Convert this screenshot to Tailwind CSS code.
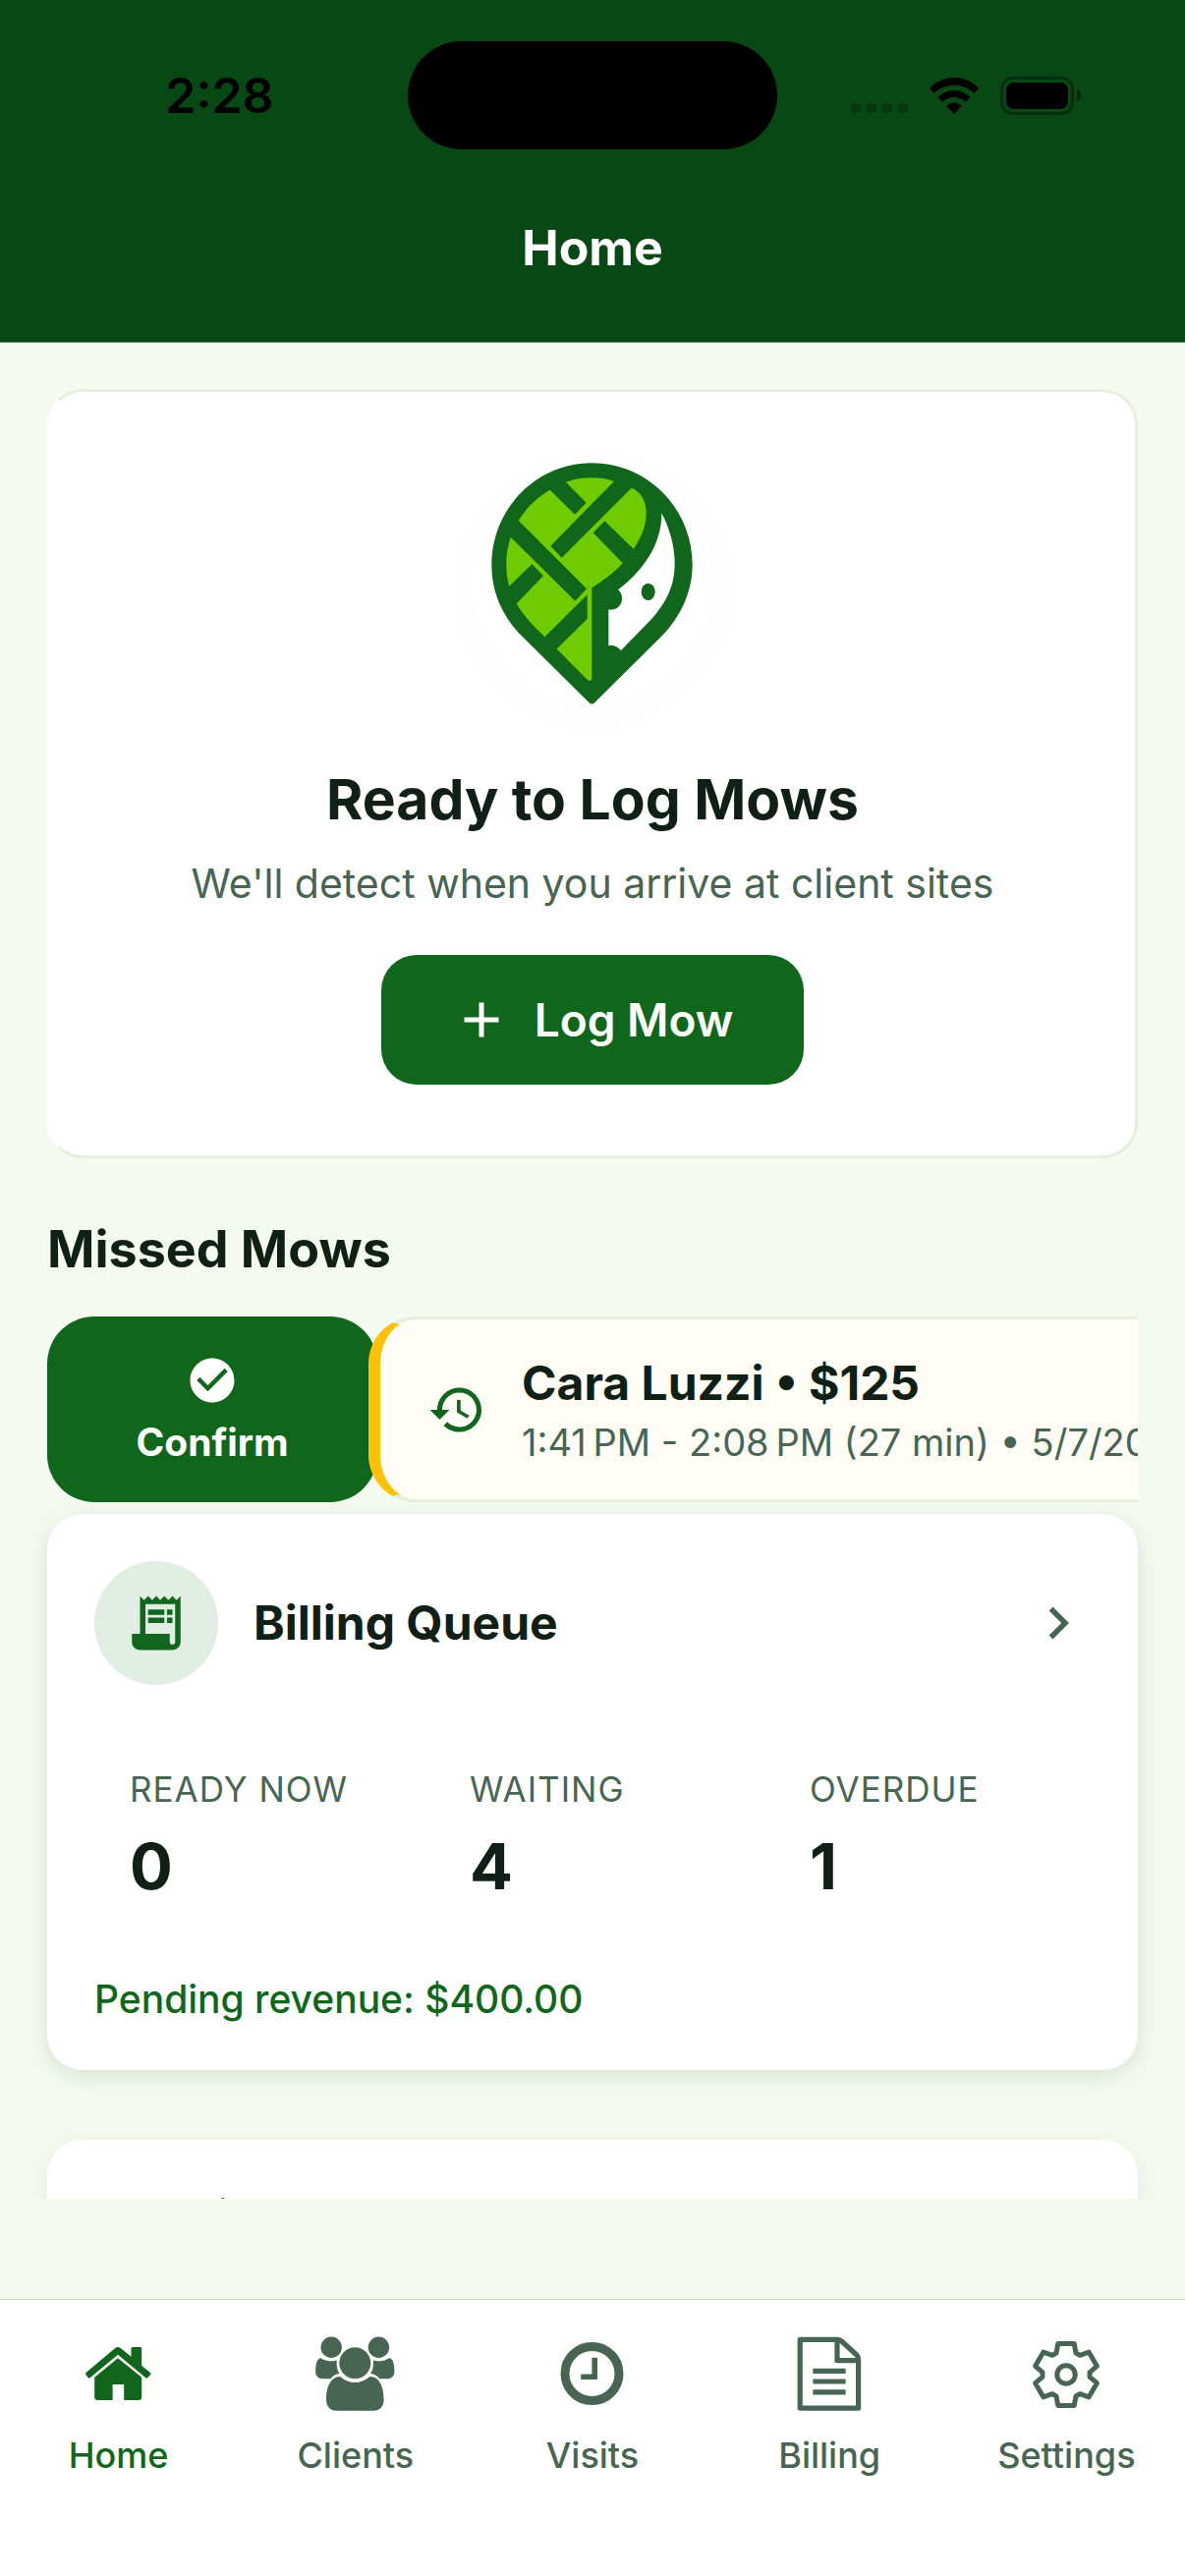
<!DOCTYPE html>
<html lang="en">
<head>
    <meta charset="UTF-8">
    <meta name="viewport" content="width=device-width, initial-scale=1.0">
    <title>Home</title>
    <script src="https://cdn.jsdelivr.net/npm/@tailwindcss/browser@4"></script>
</head>
<body class="h-screen flex flex-col overflow-hidden bg-[#f4faf0] font-[Inter,sans-serif] text-[#102016]">
    <header class="bg-[#084814] border-b border-[#7d9a80]">
        <!-- Status bar -->
        <div class="grid grid-cols-[1fr_376px_1fr] items-center h-[156px] pt-[38px] text-black">
            <div class="pl-8 text-center text-[50px] leading-[60px] font-semibold">2:28</div>
            <div class="h-[110px] rounded-full bg-black"></div>
            <div class="pr-8 flex items-center justify-center gap-[22px]">
                <div class="flex gap-1.5 self-end pb-0.5">
                    <span class="size-[10px] rounded-[3px] bg-black/20"></span>
                    <span class="size-[10px] rounded-[3px] bg-black/20"></span>
                    <span class="size-[10px] rounded-[3px] bg-black/20"></span>
                    <span class="size-[10px] rounded-[3px] bg-black/20"></span>
                </div>
                <svg class="w-[50px] h-[37px]" viewBox="0 0 50 37" fill="currentColor">
                    <path d="M0 11C14-3.7 36-3.7 50 11l-4.5 5C34 5 16 5 4.5 16z"/>
                    <path d="M8.7 20C18 10.5 32 10.5 41.3 20l-4.5 4.7C30 18.5 20 18.5 13.2 24.7z"/>
                    <path d="M17.3 29C21.5 24.2 28.5 24.2 32.7 29L25 37z"/>
                </svg>
                <div class="flex items-center gap-[3px]">
                    <div class="w-[75px] h-[39px] rounded-[13px] border-3 border-black/35 p-[3px]">
                        <div class="h-full rounded-[8px] bg-black"></div>
                    </div>
                    <div class="w-1 h-3 rounded-r-full bg-black/40"></div>
                </div>
            </div>
        </div>
        <div class="flex items-center justify-center h-48 text-white">
            <h1 class="text-[50px] leading-[60px] font-bold">Home</h1>
        </div>
    </header>

    <main class="flex-1 min-h-0 overflow-hidden px-12 pt-[47px] mb-[102px]">
        <!-- Log mow -->
        <section class="flex flex-col items-center rounded-[36px] border-3 border-[#e4efdd] border-l-white bg-white px-12 py-[72px] text-center">
            <div class="size-[246px] rounded-full bg-white shadow-[0_6px_48px_rgba(0,0,0,0.02)]">
                <svg class="size-full" viewBox="119 93 738 738">
                    <path fill="#10661b" d="M486 94C655 94 793 232 793 405C793 490 755 565 700 622L495 825Q486 834 477 825L262 612C215 562 180 490 180 405C180 232 318 94 486 94Z"/>
                    <path fill="#70cc00" d="M486 475C540 440 578 410 613 357C640 315 652 285 652 245C652 210 635 182 608 170L553 149C530 141 510 139 486 139C455 139 430 143 408 152C300 190 225 290 225 402C225 450 235 490 256 523C280 565 310 593 342 625L472 755Q486 764 486 750Z"/>
                    <g fill="#10661b">
                        <path d="M434 251L469 215L390 136L335 153Z"/>
                        <path d="M360 347L394 383L622 155L575 128Z"/>
                        <path d="M490 307L525 271L627 370L592 412Z"/>
                        <path d="M250 257L470 478L435 515L220 302Z"/>
                        <path d="M303 403L338 438L240 540L210 493Z"/>
                        <path d="M472 496V570L370 670L330 637Z"/>
                    </g>
                    <path fill="#fff" d="M699 247C722 290 739 345 739 402C739 480 703 532 665 574L575 666C565 655 552 649 537 652V541C560 546 578 530 578 508C578 495 573 486 566 481C640 425 700 345 699 247Z"/>
                    <ellipse cx="658" cy="487" rx="21" ry="26" fill="#10661b"/>
                </svg>
            </div>
            <h2 class="mt-[54px] text-[57px] leading-[86px] font-bold">Ready to Log Mows</h2>
            <p class="mt-3 text-[41px] leading-[60px] text-[#486553]">We'll detect when you arrive at client sites</p>
            <button type="button" class="mt-[43px] flex items-center gap-6 h-[132px] px-[72px] rounded-[36px] bg-[#10661b] text-white text-[46px] font-semibold">
                <svg class="size-[60px]" viewBox="0 0 24 24" fill="currentColor">
                    <path d="M19 13h-6v6h-2v-6H5v-2h6V5h2v6h6v2z"/>
                </svg>
                Log Mow
            </button>
        </section>

        <!-- Missed mows -->
        <h2 class="mt-[60px] text-[52px] leading-[66px] font-bold">Missed Mows</h2>
        <div class="mt-[35px] flex h-[189px] overflow-hidden">
            <button type="button" class="w-[336px] shrink-0 flex flex-col items-center justify-center gap-3 rounded-[48px] bg-[#10661b] text-white">
                <svg class="size-[54px]" viewBox="0 0 24 24" fill="currentColor">
                    <path d="M12 2C6.48 2 2 6.48 2 12s4.48 10 10 10 10-4.48 10-10S17.52 2 12 2zm-2 15l-5-5 1.41-1.41L10 14.17l7.59-7.59L19 8l-9 9z"/>
                </svg>
                <span class="text-[39px] leading-[48px] font-bold">Confirm</span>
            </button>
            <article class="-ml-[9px] w-[1110px] shrink-0 flex items-center gap-9 rounded-[48px] border-3 border-l-12 border-[#e4efdd] border-l-[#ffc107] bg-[#fffdf5] pl-12">
                <svg class="size-[60px] shrink-0 text-[#10661b]" viewBox="0 0 24 24" fill="currentColor">
                    <path d="M13 3c-4.97 0-9 4.03-9 9H1l3.89 3.89.07.14L9 12H6c0-3.87 3.13-7 7-7s7 3.13 7 7-3.13 7-7 7c-1.93 0-3.68-.79-4.94-2.06l-1.42 1.42C8.27 19.99 10.51 21 13 21c4.97 0 9-4.03 9-9s-4.03-9-9-9zm-1 5v5l4.28 2.54.72-1.21-3.5-2.08V8H12z"/>
                </svg>
                <div class="whitespace-nowrap">
                    <h3 class="text-[48px] leading-[66px] font-bold">Cara Luzzi • $125</h3>
                    <p class="text-[38px] leading-[54px] text-[#486553]">1:41&#8239;PM - 2:08&#8239;PM (27 min) • 5/7/2026</p>
                </div>
            </article>
        </div>

        <!-- Billing queue -->
        <section class="mt-3 rounded-[36px] bg-white p-12 shadow-[0_6px_24px_rgba(20,50,10,0.12)]">
            <a href="#billing" class="flex items-center gap-9">
                <span class="size-[126px] flex items-center justify-center rounded-full bg-[#e1ece2] text-[#10661b]">
                    <svg class="size-[66px]" viewBox="0 0 24 24" fill="currentColor">
                        <path d="M19.5 3.5L18 2l-1.5 1.5L15 2l-1.5 1.5L12 2l-1.5 1.5L9 2 7.5 3.5 6 2v14H3v3c0 1.66 1.34 3 3 3h12c1.66 0 3-1.34 3-3V2l-1.5 1.5zM19 19c0 .55-.45 1-1 1s-1-.45-1-1v-3H8V5h11v14z"/>
                        <path d="M9 7h6v2H9zM16 7h2v2h-2zM9 10h6v2H9zM16 10h2v2h-2z"/>
                    </svg>
                </span>
                <span class="flex-1 text-[48px] leading-[66px] font-bold">Billing Queue</span>
                <svg class="size-[66px] text-[#486553]" viewBox="0 0 24 24" fill="currentColor">
                    <path d="M10 6L8.59 7.41 13.17 12l-4.58 4.59L10 18l6-6z"/>
                </svg>
            </a>
            <dl class="mt-[46px] grid grid-cols-3 gap-6">
                <div class="p-9">
                    <dt class="text-[35px] leading-[48px] tracking-[1px] whitespace-nowrap text-[#486553]">READY NOW</dt>
                    <dd class="mt-3 text-[65px] leading-[86px] font-bold">0</dd>
                </div>
                <div class="p-9">
                    <dt class="text-[35px] leading-[48px] tracking-[1px] whitespace-nowrap text-[#486553]">WAITING</dt>
                    <dd class="mt-3 text-[65px] leading-[86px] font-bold">4</dd>
                </div>
                <div class="p-9">
                    <dt class="text-[35px] leading-[48px] tracking-[1px] whitespace-nowrap text-[#486553]">OVERDUE</dt>
                    <dd class="mt-3 text-[65px] leading-[86px] font-bold">1</dd>
                </div>
            </dl>
            <p class="mt-8 text-[39px] leading-[48px] font-medium text-[#10661b]">Pending revenue: $400.00</p>
        </section>

        <section class="mt-[71px] h-60 rounded-[36px] bg-white p-12 shadow-[0_6px_24px_rgba(20,50,10,0.08)]">
            <h2 class="text-[52px] leading-[66px] font-bold">Mowing</h2>
        </section>
    </main>

    <!-- Tab bar -->
    <nav class="grid grid-cols-5 border-t border-[#cfe3c8] bg-white pt-[35px] pb-[100px] text-[36px] leading-[46px] font-medium text-[#486553]">
        <a href="#home" class="flex flex-col items-center gap-5 text-[#10661b]">
            <svg class="size-20" viewBox="0 0 80 80" fill="currentColor">
                <path d="M39 13q-1.5 0-3 1.2L6.5 39q-1 1 0 2.2L8.5 44q1.2 1 2.4 0L39 20.8 67 44q1.2 1 2.4 0l2.6-2.8q1-1 0-2.2L63.2 32V14.5q0-1.5-1.5-1.5H54q-1.5 0-1.5 1.5v8.3L42 14.2Q40.5 13 39 13z"/>
                <path d="M39 24.3L15.2 43.7V64q0 3 3 3h15.4V51h11.6v16h15q3 0 3-3V43.7z"/>
            </svg>
            Home
        </a>
        <a href="#clients" class="flex flex-col items-center gap-5">
            <svg class="size-20" viewBox="0 0 80 80" fill="currentColor" overflow="visible">
                <circle cx="15.2" cy="13.3" r="10.7"/>
                <circle cx="63.4" cy="13.3" r="10.7"/>
                <circle cx="39.3" cy="29.3" r="16"/>
                <path d="M4.5 24.3C8 26.5 11 27.5 15.2 27.3c2 0 3.5-.3 5.6-.8-.6 5 .2 9.5 2.7 13.5-3.5.3-6.500 2-9 5.300H7C2 45.300-.8 42.500-.8 38c0-6 1-13.700 5.300-13.700z"/>
                <path d="M74.100 24.300C70.600 26.500 67.600 27.500 63.400 27.300c-2 0-3.500-.3-5.600-.8.6 5-.2 9.500-2.700 13.500 3.500.3 6.500 2 9 5.300h7.500c5 0 7.800-2.800 7.800-7.300 0-6-1-13.700-5.300-13.700z"/>
                <path d="M24.2 43C29 47 34 49 39.3 49s10.3-2 15.1-6c11 0 14.2 13 14.2 23.5 0 7-4 11.2-10.5 11.2H20.5C14 77.7 10 73.500 10 66.500 10 56 13.200 43 24.200 43z"/>
            </svg>
            Clients
        </a>
        <a href="#visits" class="flex flex-col items-center gap-5">
            <svg class="size-20" viewBox="0 0 80 80" fill="none" stroke="currentColor">
                <circle cx="39.5" cy="40" r="27.5" stroke-width="9"/>
                <path d="M42.2 26.5v16.7H31" stroke-width="5.6" stroke-linecap="square"/>
            </svg>
            Visits
        </a>
        <a href="#billing" class="flex flex-col items-center gap-5">
            <svg class="size-20" viewBox="0 0 80 80" fill="none" stroke="currentColor" stroke-width="5.2" stroke-linejoin="round">
                <path d="M10.2 5.3H48.5q2.5 0 4 1.7L67.8 21q1.8 1.8 1.8 4.5V75.1H10.2z"/>
                <path d="M48 6v20.7h21"/>
                <path d="M26 37.4h28M26 48h28M26 58.8h28" stroke-linecap="square"/>
            </svg>
            Billing
        </a>
        <a href="#settings" class="flex flex-col items-center gap-5">
            <svg class="size-20" viewBox="-40 -41 80 80" fill="none" stroke="currentColor" stroke-width="5" stroke-linejoin="round">
                <circle r="9.2"/>
                <path d="M-8.2-31.5H8.2L10-22l4.05 2.34 9.13-3.19 8.2 14.2-7.33 6.31v4.68l7.33 6.31-8.2 14.2-9.13-3.19L10 22l-1.8 9.5H-8.2L-10 22l-4.05-2.34-9.13 3.19-8.2-14.2 7.33-6.31v-4.68l-7.33-6.31 8.2-14.2 9.13 3.19L-10-22z"/>
            </svg>
            Settings
        </a>
    </nav>
</body>
</html>
